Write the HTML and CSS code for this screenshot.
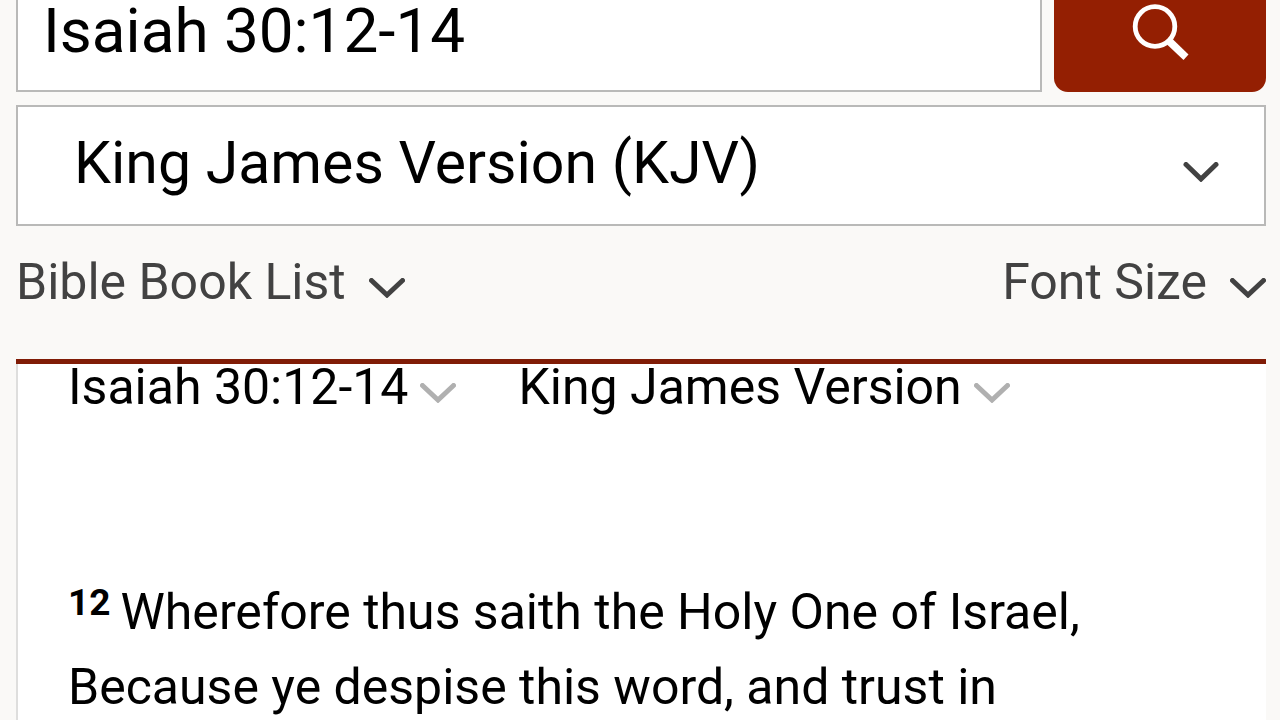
FILE: index.html
```html
<!DOCTYPE html>
<html lang="en">
<head>
<meta charset="utf-8">
<meta name="viewport" content="width=device-width, initial-scale=1">
<title>Isaiah 30:12-14 KJV</title>
<link rel="stylesheet" href="styles.css">
</head>
<body>
<form class="search">
  <div class="search-row">
    <input class="search-input" type="text" aria-label="Passage" value="Isaiah 30:12-14">
    <button class="search-button" type="submit" aria-label="Search">
      <svg class="search-icon" viewBox="0 0 58 58" aria-hidden="true">
        <circle cx="24" cy="23.500" r="19.800" fill="none" stroke="#fff" stroke-width="4.800"/>
        <path d="M36 41.500L41.500 36L57.500 51.500L52.500 57Z" fill="#fff"/>
      </svg>
    </button>
  </div>
  <div class="version">
    <select class="version-select" aria-label="Version">
      <option>King James Version (KJV)</option>
    </select>
    <svg class="chevron version-chevron" viewBox="0 0 36 20" aria-hidden="true"><path d="M3 2.500L18 17L33 2.500"/></svg>
  </div>
</form>
<nav class="tools">
  <button class="tool" type="button">Bible Book List
    <svg class="chevron" viewBox="0 0 36 20" aria-hidden="true"><path d="M2.500 2.500L18 17L33.500 2.500"/></svg>
  </button>
  <button class="tool" type="button">Font Size
    <svg class="chevron" viewBox="0 0 36 20" aria-hidden="true"><path d="M2.500 2.500L18 17L33.500 2.500"/></svg>
  </button>
</nav>
<main class="passage">
  <header class="passage-head">
    <button class="picker" type="button">Isaiah 30:12-14
      <svg class="chevron" viewBox="0 0 36 20" aria-hidden="true"><path d="M2.500 2.500L18 17L33.500 2.500"/></svg>
    </button>
    <button class="picker" type="button">King James Version
      <svg class="chevron" viewBox="0 0 36 20" aria-hidden="true"><path d="M2.500 2.500L18 17L33.500 2.500"/></svg>
    </button>
  </header>
  <p class="verse"><sup class="verse-number">12</sup>Wherefore thus saith the Holy One of Israel, Because ye despise this word, and trust in</p>
</main>
</body>
</html>
```
FILE: styles.css
```css
* {
  box-sizing: border-box;
}

body {
  display: flex;
  flex-direction: column;
  min-height: 100vh;
  margin: 0;
  padding: 0 14px 0 16px;
  background: #faf9f7;
  color: #000;
  font-family: Roboto, "Liberation Sans", sans-serif;
  font-size: 50px;
}

button,
input,
select {
  margin: 0;
  border: 0;
  border-radius: 0;
  background: none;
  color: inherit;
  font: inherit;
}

.search {
  display: flex;
  flex-direction: column;
  gap: 13px;
}

.search-row {
  display: flex;
  gap: 12px;
}

.search-input {
  flex: 1;
  min-width: 0;
  height: 92px;
  padding: 0 25px 30px;
  border: 2px solid #b9b9b8;
  border-top: 0;
  background: #fff;
  font-size: 62px;
  line-height: 60px;
}

.search-button {
  display: flex;
  justify-content: center;
  width: 212px;
  padding: 3px 0 0;
  border-radius: 0 0 14px 14px;
  background: #941f02;
}

.search-icon {
  width: 58px;
  height: 58px;
}

.version {
  position: relative;
}

.version-select {
  display: block;
  width: 100%;
  height: 121px;
  padding: 0 80px 6px 56px;
  border: 2px solid #b9b9b8;
  background: #fff;
  font-size: 59px;
  appearance: none;
}

.chevron {
  flex: none;
  width: 36px;
  height: 20px;
  fill: none;
  stroke: #424242;
  stroke-width: 5;
  stroke-linecap: round;
}

.version-chevron {
  position: absolute;
  top: 57px;
  right: 47px;
  pointer-events: none;
}

.tools {
  display: flex;
  justify-content: space-between;
  padding: 24px 0 45px;
  color: #424242;
}

.tool,
.picker {
  display: flex;
  align-items: center;
  padding: 0;
  line-height: 64px;
}

.tool {
  gap: 23px;
}

.tool .chevron,
.picker .chevron {
  margin-top: 12px;
}

.passage {
  flex: 1;
  padding: 0 52px;
  border-top: 5px solid #801c06;
  background: #fff;
  box-shadow: inset 2px 0 #dededd;
}

.passage-head {
  display: flex;
  gap: 62px;
  margin-top: -9px;
}

.picker {
  gap: 12px;
}

.picker .chevron {
  stroke: #b0b0b0;
}

.verse {
  margin: 156px 0 0;
  line-height: 75px;
}

.verse-number {
  margin-right: 10px;
  font-size: 37px;
  font-weight: 700;
  line-height: 1;
  vertical-align: 14px;
}
```
